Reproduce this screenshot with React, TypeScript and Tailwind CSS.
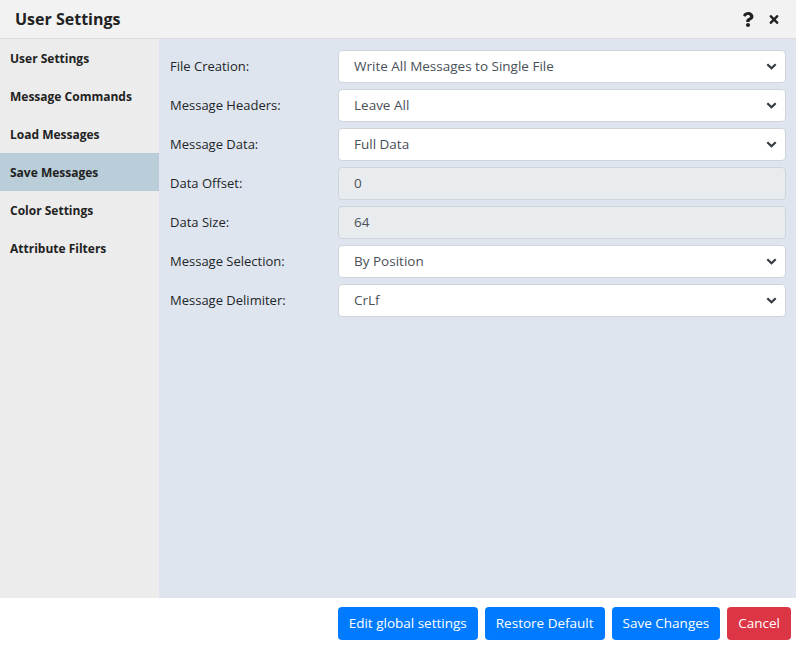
import { FaQuestion, FaTimes } from 'react-icons/fa'

const menu = [
  'User Settings',
  'Message Commands',
  'Load Messages',
  'Save Messages',
  'Color Settings',
  'Attribute Filters',
]

const fields: { label: string; value: string; kind: 'select' | 'input' }[] = [
  { label: 'File Creation:', value: 'Write All Messages to Single File', kind: 'select' },
  { label: 'Message Headers:', value: 'Leave All', kind: 'select' },
  { label: 'Message Data:', value: 'Full Data', kind: 'select' },
  { label: 'Data Offset:', value: '0', kind: 'input' },
  { label: 'Data Size:', value: '64', kind: 'input' },
  { label: 'Message Selection:', value: 'By Position', kind: 'select' },
  { label: 'Message Delimiter:', value: 'CrLf', kind: 'select' },
]

function Chevron() {
  return (
    <svg width="11" height="7" viewBox="0 0 11 7" className="text-[#343a40]">
      <path d="M1.3 1.3 L5.5 5.3 L9.7 1.3" fill="none" stroke="currentColor" strokeWidth="2.2" />
    </svg>
  )
}

function Field({ label, value, kind }: { label: string; value: string; kind: 'select' | 'input' }) {
  return (
    <div className="flex items-center h-[33px]">
      <label className="w-[168px] shrink-0 text-[13px] text-[#212529]">{label}</label>
      <div
        className={`flex-1 h-[33px] flex items-center justify-between pl-[15px] pr-[8px] rounded border border-[#ced4da] text-[13.5px] text-[#495057] ${
          kind === 'input' ? 'bg-[#e9ecef]' : 'bg-white'
        }`}
      >
        <span>{value}</span>
        {kind === 'select' && <Chevron />}
      </div>
    </div>
  )
}

export default function App() {
  const active = 'Save Messages'
  return (
    <div className="w-[796px] h-[648px] flex flex-col bg-white font-['Open_Sans',sans-serif] text-[#212529]">
      <header className="h-[39px] shrink-0 flex items-center justify-between bg-[#f2f2f2] border-b border-[#dcdcdc] pl-[15px] pr-[16px]">
        <h1 className="text-[16px] font-bold text-[#222]">User Settings</h1>
        <div className="flex items-center gap-[14px] text-[#222]">
          <FaQuestion className="w-[12px] h-[15px]" />
          <FaTimes className="w-[12px] h-[13px]" />
        </div>
      </header>

      <div className="flex flex-1 min-h-0">
        <nav className="w-[159px] shrink-0 bg-[#ececec]">
          {menu.map((m) => (
            <div
              key={m}
              className={`h-[38px] flex items-center pl-[10px] pt-[2px] text-[12px] font-bold text-[#222] ${
                m === active ? 'bg-[#b9ced8]' : ''
              }`}
            >
              {m}
            </div>
          ))}
        </nav>
        <main className="flex-1 bg-[#dfe5ee] pt-[11px] pl-[11px] pr-[10px] flex flex-col gap-[6px]">
          {fields.map((f) => (
            <Field key={f.label} {...f} />
          ))}
        </main>
      </div>

      <footer className="h-[50px] shrink-0 flex items-center justify-end gap-[7px] pr-[5px] text-[13.5px] text-white">
        <button className="h-[33px] px-[11px] rounded bg-[#007bff]">Edit global settings</button>
        <button className="h-[33px] px-[11px] rounded bg-[#007bff]">Restore Default</button>
        <button className="h-[33px] px-[11px] rounded bg-[#007bff]">Save Changes</button>
        <button className="h-[33px] px-[11px] rounded bg-[#dc3545]">Cancel</button>
      </footer>
    </div>
  )
}
